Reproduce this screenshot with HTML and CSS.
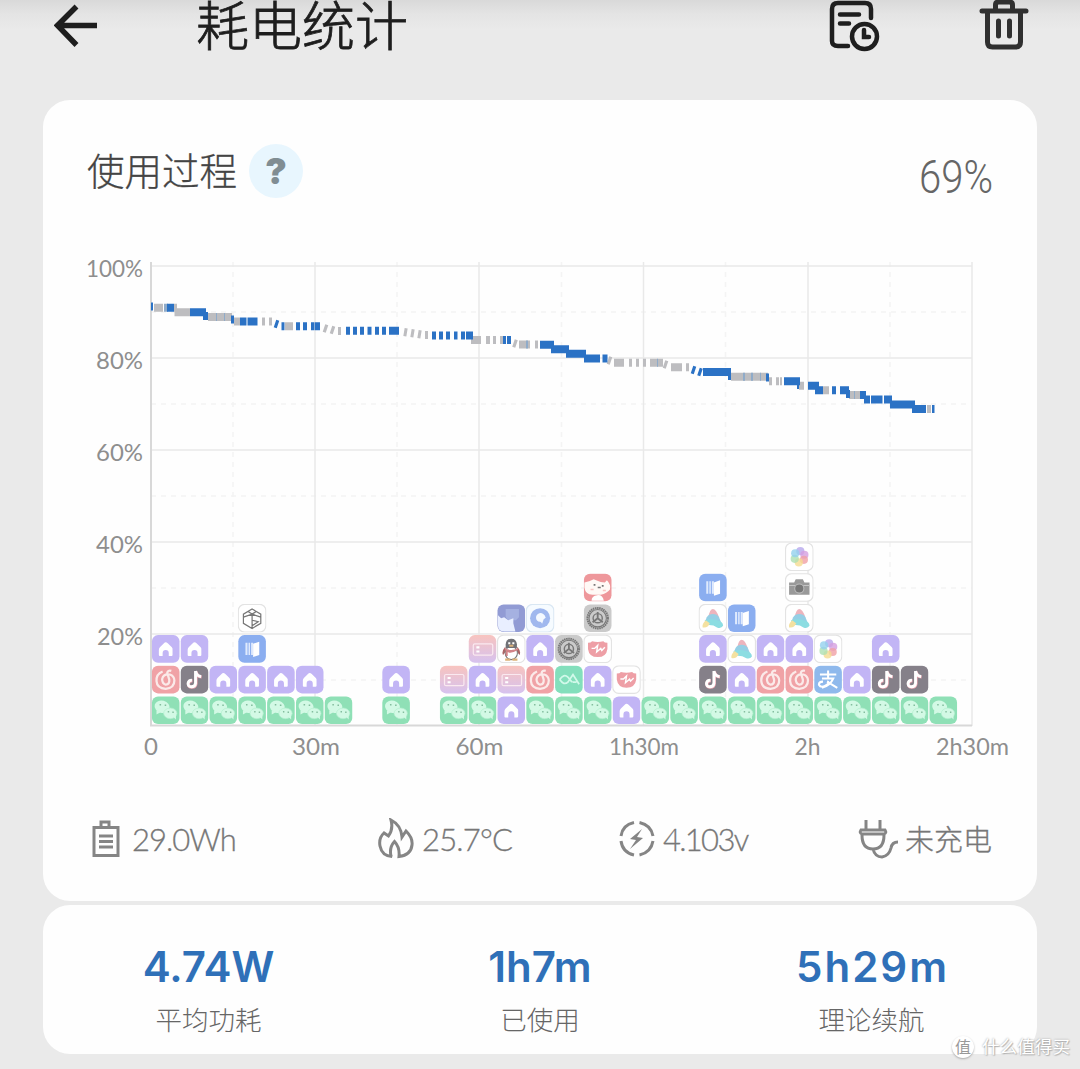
FILE: index.html
```
<!DOCTYPE html>
<html lang="zh-CN">
<head>
    <meta charset="UTF-8">
    <meta name="viewport" content="width=device-width, initial-scale=1.0">
    <title>耗电统计</title>
    <link rel="stylesheet" href="styles.css">
</head>
<body>
    <header class="topbar">
        <svg class="back" width="44" height="44" viewBox="0 0 44 44"><path d="M43 21.5H4M22.5 2.500L3.500 21.500L22.500 41"/></svg>
        <h1>耗电统计</h1>
        <svg class="history" width="52" height="52" viewBox="0 0 52 52">
            <path d="M42 18V9q0-6-6-6H9Q3 3 3 9v32q0 5 6 5h10"/>
            <path d="M11 14.500h19M11 23.500h9"/>
            <circle cx="35.500" cy="36.500" r="12.500"/>
            <path d="M35 30v7h5"/>
        </svg>
        <svg class="trash" width="50" height="50" viewBox="0 0 50 50">
            <path d="M3 11h44M16.500 10V5q0-3 3-3h11q3 0 3 3v5M8.500 12v30q0 5 5 5h23q5 0 5-5V12M19.500 21v15M30.500 21v15"/>
        </svg>
    </header>

    <section class="card process">
        <div class="card-head">
            <h2>使用过程</h2>
            <span class="help">?</span>
            <span class="level">69%</span>
        </div>

        <svg class="chart" width="994" height="520" viewBox="43 250 994 520">
            <defs>
                <symbol id="wechat" viewBox="0 0 28 28">
                    <rect class="tile" fill="#8fe0b6"/>
                    <ellipse cx="10.500" cy="10.500" rx="7.500" ry="6" fill="#d3f9e5" transform="rotate(15 10.500 10.500)"/>
                    <path d="M5 14l0 4 4-2z" fill="#d3f9e5"/>
                    <ellipse cx="18.500" cy="17" rx="6.500" ry="5.200" fill="#d3f9e5" stroke="#b3efd0" stroke-width=".7"/>
                    <path d="M21 20l3 3 0-5z" fill="#d3f9e5"/>
                    <path d="M8 8.500h1.500M13 9h1.500M16 15.500h1.400M20.500 16h1.400" stroke="#84bd9e" stroke-width="1.500"/>
                </symbol>
                <symbol id="home" viewBox="0 0 28 28">
                    <rect class="tile" fill="#c2b5f5"/>
                    <path d="M14 7.500q1 0 2 1l4 4q1 1 .7 2.500V20q0 1-1 1H17v-3q0-3-3-3t-3 3v3H8.300q-1 0-1-1v-5q0-1.500 1-2.500l4-4q.8-1 1.700-1z" fill="#fff"/>
                </symbol>
                <symbol id="netease" viewBox="0 0 28 28">
                    <rect class="tile" fill="#f0a2a6"/>
                    <path d="M11 6Q4.500 8.500 5 15.500t9 7.500q8.500-.5 8.500-8 0-4.500-4.500-6-6.500-1-7.500 4.500 0 4.500 3.500 5.500 4-.5 3.500-5L15.500 7.500q.5-3 4-2" fill="none" stroke="#fbeae9" stroke-width="2.200"/>
                </symbol>
                <symbol id="tiktok" viewBox="0 0 28 28">
                    <rect class="tile" fill="#858089"/>
                    <path d="M15.500 6v12q-.5 3.500-4 3.500T8 18q.5-3 4-3M15.500 6q1 5 5.500 5.500" fill="none" stroke="#f2a9b5" stroke-width="3"/>
                    <path d="M15 5.500v12q-.5 3.500-4 3.500t-3.300-3.500q.5-3 3.800-3M15 5.500q1 5 5.500 5.500" fill="none" stroke="#fff" stroke-width="2.800"/>
                </symbol>
                <symbol id="door" viewBox="0 0 28 28">
                    <rect class="tile" fill="#8baef0"/>
                    <path d="M7.500 8h2v12h-2zM10.500 8h1.500v12h-1.500zM13 8h2v12h-2z" fill="#dfeafd"/>
                    <path d="M15 9l6-2v13l-6 2z" fill="#fff"/>
                </symbol>
                <symbol id="cube" viewBox="0 0 28 28">
                    <rect class="tile line" fill="#fff"/>
                    <path d="M14 5l8.500 5v9L14 24l-8.500-5v-9zM14 10v14M5.500 13L14 10l8.500 3M14 16l6 1.500-6 4M10 7.500l4 2.500 4-2.500" fill="none" stroke="#777" stroke-width="1.200"/>
                </symbol>
                <symbol id="card" viewBox="0 0 28 28">
                    <rect class="tile" fill="url(#cardFill)"/>
                    <rect x="5" y="9" width="19" height="11" rx="1.500" fill="none" stroke="#fae9f0" stroke-width="1.200"/>
                    <path d="M8 12.500h3M8 16.500h3" stroke="#fff" stroke-width="2"/>
                </symbol>
                <linearGradient id="cardFill" x1="0" y1="0" x2="0" y2="1">
                    <stop offset="0" stop-color="#f8c4bf"/>
                    <stop offset="1" stop-color="#d6c2ef"/>
                </linearGradient>
                <symbol id="qq" viewBox="0 0 28 28">
                    <rect class="tile line" fill="#fff"/>
                    <path d="M8 12q-4 5-2 8l3-4M20 12q4 5 2 8l-3-4" fill="#a66"/>
                    <ellipse cx="14" cy="18" rx="6" ry="6.500" fill="#fff" stroke="#777"/>
                    <path d="M8.500 13V9.500Q9 4 14 4t5.500 5.500V13z" fill="#707176"/>
                    <path d="M7.500 13q6.500 4 13 0v2q-7 4-10 2v4h-2v-5z" fill="#d28488"/>
                    <path d="M11 8.500h2M15 8.500h2" stroke="#fff" stroke-width="2"/>
                    <path d="M12 11h4" stroke="#d9b17b" stroke-width="2"/>
                    <path d="M8 24.500h5M15 24.500h5" stroke="#dcb279" stroke-width="2"/>
                </symbol>
                <symbol id="cat" viewBox="0 0 28 28">
                    <rect class="tile" fill="#919bd4"/>
                    <path d="M8.500 5v7q1 4 5 4h5l3-3V5z" fill="#a5b1e1"/>
                    <path d="M1 11l3 3 3-1 4 3 5-2v5l2 8H7q-6 0-6-5.500z" fill="#e9efff"/>
                </symbol>
                <symbol id="browser" viewBox="0 0 28 28">
                    <rect class="tile line blue" fill="#f6fbff"/>
                    <circle cx="14" cy="14" r="9.800" fill="#a0b8ee"/>
                    <path d="M14 9q4 0 5.500 4.500l-2 1.500-1.500 4.500q-1-2-2-2-4-.5-4-4T14 9z" fill="#f4f9ff"/>
                </symbol>
                <symbol id="cloud" viewBox="0 0 28 28">
                    <rect class="tile" fill="#83dfbc"/>
                    <path d="M5 14q4-6 8-2.500l4 5M5 14q4 6 8 2.500L18 9l6 9.500M17.500 16.500h4" fill="none" stroke="#d2f9ea" stroke-width="1.700"/>
                </symbol>
                <symbol id="settings" viewBox="0 0 28 28">
                    <rect class="tile" fill="#cacaca"/>
                    <circle cx="14" cy="14" r="10" fill="none" stroke="#777" stroke-width="2" stroke-dasharray="1.500 .6"/>
                    <circle cx="14" cy="14" r="8.500" fill="none" stroke="#777"/>
                    <path d="M14 8v6M14 14l-5 4M14 14l5 4" fill="none" stroke="#777" stroke-width="1.800"/>
                    <circle cx="14" cy="14" r="4.500" fill="none" stroke="#777" stroke-width="1.400"/>
                </symbol>
                <symbol id="pulse" viewBox="0 0 28 28">
                    <rect class="tile line" fill="#fff"/>
                    <path d="M4.500 8q3 0 4-1.500 5.500 1.500 11 0 1 1.500 4 1.500v6q-1 8-9.500 8T4.500 14z" fill="#ee9fa6"/>
                    <path d="M8 13.500h3l3-3-1 6.500 4-3.500 1 2 3-3" fill="none" stroke="#fff" stroke-width="1.400"/>
                </symbol>
                <symbol id="face" viewBox="0 0 28 28">
                    <rect class="tile" fill="#ee979b"/>
                    <path d="M1 9q5-.5 9-3 6 3 11 3l2-2q4 4 3 9-3 4-9 5H9q-7 0-8-7z" fill="#fff9f6"/>
                    <path d="M8 27q0-5 5.500-5.500T20 27z" fill="#fff"/>
                    <path d="M10 11.500h1.800M18 12.500h1.800M14 14h3" stroke="#777" stroke-width="1.700"/>
                    <path d="M7 16h3M19 17h3" stroke="#f8c5c3" stroke-width="1.500"/>
                </symbol>
                <symbol id="peak" viewBox="0 0 28 28">
                    <rect class="tile line" fill="#fff"/>
                    <path d="M9.500 13q1.500-8 4.500-8t6 8z" fill="#edb4bd"/>
                    <path d="M8 13q2-3 6-3t6 3l2 5H6z" fill="#95cfe5"/>
                    <path d="M6 16q7-2 12 0 6 1 6 5.500-2 3-6 1.500-4-3-11-2z" fill="#8cdde2"/>
                    <path d="M7 16q-4 4-3 7 5 1 7-4z" fill="#f4e1a0"/>
                </symbol>
                <symbol id="camera" viewBox="0 0 28 28">
                    <rect class="tile line" fill="#fff"/>
                    <path d="M4 9h5l1.500-3h7L19 9h5v12H4z" fill="#999"/>
                    <path d="M4 12h20" stroke="#c5c5c5"/>
                    <circle cx="14" cy="15" r="4.500" fill="#777" stroke="#bbb"/>
                </symbol>
                <symbol id="photos" viewBox="0 0 28 28">
                    <rect class="tile line" fill="#fff"/>
                    <g fill-opacity=".8">
                        <circle cx="15" cy="8.500" r="4" fill="#b7a7ec"/>
                        <circle cx="19" cy="12" r="4" fill="#d59fe0"/>
                        <circle cx="18.500" cy="17" r="4" fill="#f0a0a5"/>
                        <circle cx="13.500" cy="19.500" r="4" fill="#f5dc91"/>
                        <circle cx="9.500" cy="16" r="4" fill="#aee0b3"/>
                        <circle cx="10" cy="10.500" r="4" fill="#94d1ee"/>
                    </g>
                </symbol>
                <symbol id="alipay" viewBox="0 0 28 28">
                    <rect class="tile" fill="#8fb9ec"/>
                    <path d="M6 9h16M14 5v8M8 13h11q-3 7-11 9M9 16q-4 0-4 3 2 4 8 0 3-3 0-3M13 16l10 6" fill="none" stroke="#fff" stroke-width="2"/>
                </symbol>
            </defs>

            <path class="grid-dash" d="M233 262V726M397 262V726M561.500 262V726M725.500 262V726M890 262V726M151 312H972M151 404H972M151 496H972M151 588H972M151 680H972"/>
            <path class="grid" d="M151 262V726M315 262V726M479 262V726M643.500 262V726M808 262V726M972 262V726M151 266H972M151 358H972M151 450H972M151 542H972M151 634H972"/>
            <path class="axis" d="M151 262V725.500H972"/>

            <g id="apps"></g>

            <path class="curve idle" d="M154 307.700h9M174 307.700h3M174.500 312.300H190M208 317h24M234 321.500h6M262 321.500h3M269 321.500h3M285 326.200h8M471 340h10M486 340h4M493 340h3M500 340h3M519 344.500h11M535 344.500h3M614 362.800h10M629 362.800h3M636 362.800h3M643 362.800h3M650 362.800h13M671 367.300h10M686 367.300h3M680 367.300h2M731 376.800h37M769 381.200h3M776 381.200h3M780 381.200h2M799 385.700h5M823 390.300h6M849 395h11M927 409h4"/>
            <path class="curve idle" d="M324 328l3 1M331 329.500l3 1M338 331h3M404 332l3 .5M411 333l3 .5M418 334l3 .5M425 335h3M513.500 343l3 1M608 360l3 1M664 364l3 1"/>
            <path class="curve idle alt" d="M164 307.700h4M216 317h1M224 317h1M743 376.800h2M751 376.800h2M760 376.800h1M657 362.800h1M526 344.500h2M854 395h1"/>
            <path class="curve active" d="M151 306.500h2M167 307.700h7M190 312.300h16M203 316h5M231 319.500h3M240 321.500h6.500M247.500 321.500h10M275 323.500l3 1M281.500 326.200h3M296 326.200h4M303 326.200h4M311 326.200h3.500M315 326.200h5M346 330.800h4M353 330.800h4M360 330.800h4M367.500 330.800h4M375 330.800h4M382 330.800h4M389 330.800h10M432 335.400h4M439 335.400h4M446 335.400h4M454 335.400h3.500M461 335.400h4M466 335.400h7M503 340h3M507 340h4M540 344.800h14M551 349.200h18M566 353.800h20M584 358.400h16M602.500 358.400h5M692 369.500l3 1M698.500 371.500l3 1M703 372h28M728 376h3M766 377.500h3M784 381.200h16M797 385h2M808 385.700h11M815 390.300h8M832 390.300h4M840 390.300h9M846 394h4M860 395h6M864 399.500h6M871 399.500h11.500M884 399.500h8M890 404.500h25M912 409h14M932 409h2.500"/>

            <g class="labels" text-anchor="end">
                <text x="143" y="277" textLength="57" lengthAdjust="spacingAndGlyphs">100%</text>
                <text x="143" y="369" textLength="47" lengthAdjust="spacingAndGlyphs">80%</text>
                <text x="143" y="461" textLength="47" lengthAdjust="spacingAndGlyphs">60%</text>
                <text x="143" y="553" textLength="47" lengthAdjust="spacingAndGlyphs">40%</text>
                <text x="143" y="645" textLength="46" lengthAdjust="spacingAndGlyphs">20%</text>
            </g>
            <g class="labels" text-anchor="middle">
                <text x="151" y="755">0</text>
                <text x="316" y="755" textLength="48" lengthAdjust="spacingAndGlyphs">30m</text>
                <text x="479.500" y="755" textLength="48" lengthAdjust="spacingAndGlyphs">60m</text>
                <text x="644" y="755" textLength="70" lengthAdjust="spacingAndGlyphs">1h30m</text>
                <text x="807.500" y="755" textLength="26" lengthAdjust="spacingAndGlyphs">2h</text>
                <text x="972.500" y="755" textLength="73" lengthAdjust="spacingAndGlyphs">2h30m</text>
            </g>
        </svg>

        <ul class="readings">
            <li class="energy">
                <svg width="28" height="38" viewBox="0 0 28 38"><path d="M2 7.500h24v28H2zM9 7V2h8v5M7 16h14M7 21.500h14M7 27h14"/></svg>
                <span>29.0Wh</span>
            </li>
            <li class="temp">
                <svg width="38" height="42" viewBox="0 0 38 42"><path d="M15 38.500Q5 38 3 28q-1.500-8 4-13l4.500 3q5-7 2.500-16 10 5 11 17l4-6q7 7 6 14-1 10-13 11.500 1-9-4.500-15-5.500 6-3.500 14.500z"/></svg>
                <span>25.7°C</span>
            </li>
            <li class="volt">
                <svg width="36" height="38" viewBox="0 0 36 38"><path d="M2 16Q3.500 5 15 2.500M20.500 2.500Q32 5 34 16M34 21Q32 32.500 20.500 35M15 35Q3.500 32.500 2 21"/><path class="bolt" d="M23 9L11 19l6 1-6 9 13-11-6-1z"/></svg>
                <span>4.103v</span>
            </li>
            <li class="plug">
                <svg width="42" height="42" viewBox="0 0 42 42"><path d="M9 2v10M23 2v10M4 12q-2 3 1 4h22q3-1 1-4zM5 17q0 14 11 14t11-14M16 31q2 8 9 8 7-1 9-9 1-6 7-6"/></svg>
                <span>未充电</span>
            </li>
        </ul>
    </section>

    <section class="card summary">
        <div class="stat"><strong class="watt">4.74W</strong><span>平均功耗</span></div>
        <div class="stat"><strong class="used">1h7m</strong><span>已使用</span></div>
        <div class="stat"><strong class="left">5h29m</strong><span>理论续航</span></div>
    </section>

    <div class="watermark"><i>值</i><span>什么值得买</span></div>

    <script>
        // 每列从下往上，每列约 5 分钟
        const columns = [
            'wechat netease home', 'wechat tiktok home', 'wechat home', 'wechat home door cube',
            'wechat home', 'wechat home', 'wechat', '', 'wechat home', '',
            'wechat card', 'wechat home card', 'home card qq cat', 'wechat netease home browser',
            'wechat cloud settings', 'wechat home pulse settings face', 'home pulse', 'wechat', 'wechat',
            'wechat tiktok home peak door', 'wechat home peak door', 'wechat netease home',
            'wechat netease home peak camera photos', 'wechat alipay photos', 'wechat home',
            'wechat tiktok home', 'wechat tiktok', 'wechat'
        ];
        const apps = document.getElementById('apps');
        columns.forEach(function(column, i) {
            column.split(' ').filter(Boolean).forEach(function(name, row) {
                const use = document.createElementNS('http://www.w3.org/2000/svg', 'use');
                use.setAttribute('href', '#' + name);
                use.setAttribute('x', 151.4 + i * 28.8);
                use.setAttribute('y', 696 - row * 30.7);
                use.setAttribute('width', 28.6);
                use.setAttribute('height', 28.6);
                apps.appendChild(use);
            });
        });
    </script>
</body>
</html>
```
FILE: styles.css
```
* {
    box-sizing: border-box;
    margin: 0;
    padding: 0;
}
body {
    position: relative;
    width: 1080px;
    height: 1069px;
    overflow: hidden;
    background: linear-gradient(#d9d9d9, #e4e4e4 14px, #eaeaea 30px);
    font-family: Lato, 'Noto Sans CJK SC', sans-serif;
}
svg {
    display: block;
    flex: none;
    fill: none;
}
.topbar {
    display: flex;
    align-items: flex-start;
    height: 100px;
    padding: 0 51px 0 54px;
    stroke: #1e1e1e;
}
.topbar h1 {
    margin: 0 auto 0 98px;
    font-size: 53px;
    font-weight: 300;
    line-height: 52px;
    color: #1e1e1e;
    -webkit-text-stroke: .8px #1e1e1e;
}
.back {
    margin-top: 4px;
    stroke-width: 5.5;
}
.history {
    margin-right: 98px;
    stroke-width: 4.5;
    stroke-linecap: round;
}
.trash {
    stroke: #303030;
    stroke-width: 5;
    stroke-linecap: round;
}
.card {
    width: 994px;
    margin: 0 auto;
    background: #fefefe;
    border-radius: 27px;
}
.process {
    height: 801px;
}
.card-head {
    display: flex;
    align-items: center;
    height: 150px;
    padding: 0 44px 8px;
}
.card-head h2 {
    font-size: 37.5px;
    font-weight: 300;
    line-height: 54px;
    color: #444;
    -webkit-text-stroke: .3px #444;
}
.help {
    width: 54px;
    height: 54px;
    margin-left: 12px;
    border-radius: 50%;
    background: #e8f6fe;
    color: #808d93;
    font: 900 36px/54px Inter, sans-serif;
    text-align: center;
}
.level {
    margin: 11px 0 0 auto;
    font: 300 46px/54px Roboto, sans-serif;
    color: #666;
    transform: scaleX(.87);
    transform-origin: right;
}
.grid, .grid-dash {
    stroke: #e9e9e9;
    stroke-width: 1.5;
}
.grid-dash {
    stroke: #f4f4f4;
    stroke-dasharray: 5 5;
}
.axis {
    stroke: #d8d8d8;
    stroke-width: 2;
}
.tile {
    x: .5px;
    y: .5px;
    width: 27px;
    height: 27px;
    rx: 6px;
}
.tile.line {
    stroke: #e3e3e3;
    stroke-width: 1.2;
}
.tile.blue {
    stroke: #d9e7f3;
}
.curve {
    stroke-width: 8;
}
.idle {
    stroke: #bdbdc0;
}
.alt {
    stroke: #8fabc9;
}
.active {
    stroke: #2b72c5;
}
.labels {
    font-size: 24px;
    fill: #8e8e8e;
}
.readings {
    display: flex;
    height: 138px;
    padding: 0 44px 0 49px;
    align-items: center;
    list-style: none;
    font-size: 31px;
    font-weight: 300;
    color: #777;
}
.readings li {
    display: flex;
    align-items: center;
    white-space: nowrap;
    stroke: #858585;
    stroke-width: 3;
}
.readings span {
    letter-spacing: -1px;
    -webkit-text-stroke: .3px #777;
}
.energy {
    width: 285px;
    gap: 12px;
}
.temp {
    width: 242px;
    gap: 7px;
}
.readings .temp span {
    letter-spacing: -.8px;
}
.volt {
    width: 238px;
    gap: 8px;
}
.readings .volt span {
    letter-spacing: -1.7px;
}
.plug {
    gap: 6px;
    font-size: 29px;
}
.readings .plug span {
    margin-top: -3px;
    letter-spacing: 0;
}
.bolt {
    fill: #858585;
    stroke: none;
}
.summary {
    display: flex;
    justify-content: space-between;
    height: 149px;
    margin-top: 4px;
    padding: 35px 0 0;
}
.stat {
    display: flex;
    flex-direction: column;
    align-items: center;
    width: 331px;
}
.stat strong {
    font: 600 42px/54px Inter, sans-serif;
    color: #2f70b8;
}
.stat .left {
    margin-right: -2px;
    letter-spacing: 2px;
}
.stat span {
    margin-top: 7px;
    font-size: 26.5px;
    font-weight: 300;
    line-height: 39px;
    color: #666;
}
.watermark {
    position: absolute;
    left: 952px;
    top: 1034px;
    display: flex;
    align-items: center;
    gap: 8px;
    color: #fff;
    font-size: 17.6px;
    line-height: 26px;
    text-shadow: 0 0 2px #999, 1px 1px 1px #bbb;
    white-space: nowrap;
}
.watermark i {
    width: 22px;
    height: 22px;
    border-radius: 50%;
    background: #fff;
    box-shadow: 0 1px 2px #aaa;
    color: #999;
    font-size: 16px;
    font-style: normal;
    line-height: 21px;
    text-align: center;
    text-shadow: none;
}
```
